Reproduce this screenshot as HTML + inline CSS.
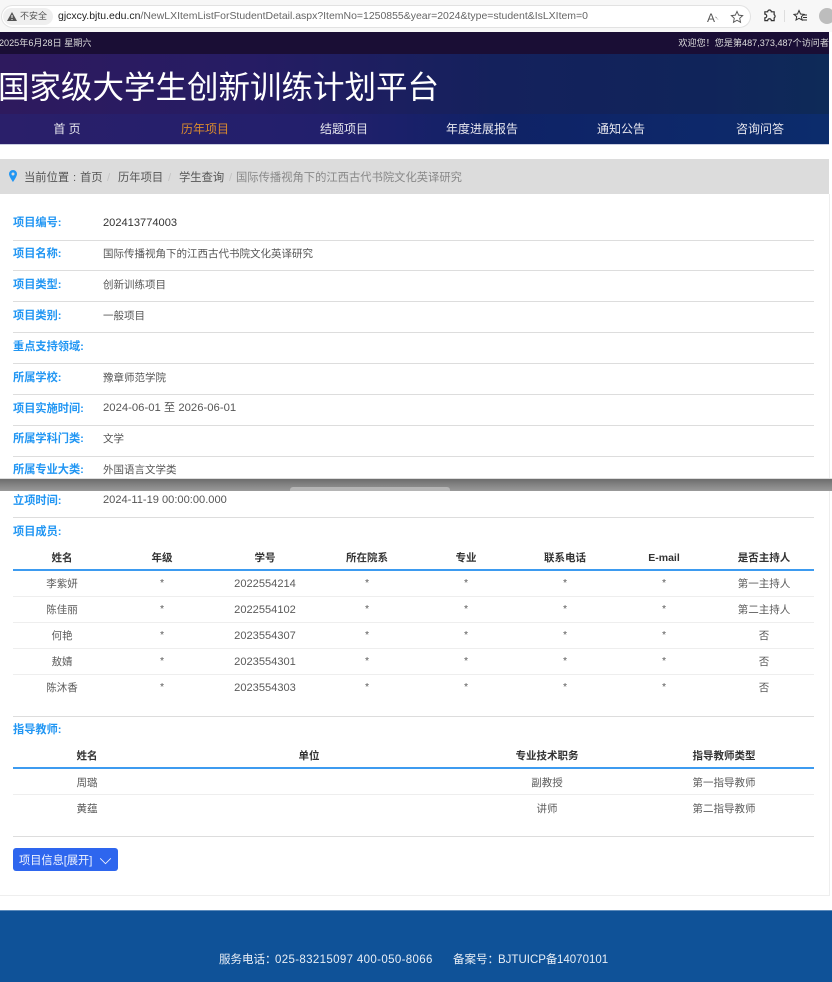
<!DOCTYPE html>
<html lang="zh-CN"><head><meta charset="utf-8"><title>国家级大学生创新训练计划平台</title>
<style>
html,body{margin:0;padding:0;background:#fff}
body{width:832px;height:982px;position:relative;overflow:hidden;font-family:"Liberation Sans","Noto Sans CJK SC",sans-serif;font-size:10.5px;color:#555}
#p{position:absolute;left:0;top:0;width:832px;height:982px;overflow:hidden;filter:blur(.35px)}
.a,.c,.l,.h,.d,.ln,.b{position:absolute}
.a,.c,.l,.h,.d{line-height:20px;white-space:nowrap}
.c,.h{transform:translateX(-50%)}
.l{left:13px;color:#2196f3;font-weight:700;font-size:11.200px;margin-top:1px}
.h{color:#333;font-weight:700;font-size:10.500px;margin-top:1px}
.c{color:#5a5a5a;margin-top:1px}
.a{color:#555}
.d{left:103px;color:#555;margin-top:1px}
.t{font-size:11.100px}
.ln{left:13px;width:801px;height:1px;background:#ddd}
.ls{left:13px;width:801px;height:1px;background:#eee}
.bl{left:13px;width:801px;height:2px;background:#3d9bf0}
.n{position:absolute;top:119px;line-height:20px;font-size:12px;color:#e6e6ee;transform:translateX(-50%);white-space:nowrap}
.bc{font-size:11.300px;top:168px}
.f{font-size:11.500px;top:950px;color:#e8eef6}
</style></head><body><div id="p">

<!-- browser chrome -->
<div class="b" style="left:0;top:0;width:832px;height:32px;background:#f7f7f7"></div>
<div class="b" style="left:1px;top:5px;width:748px;height:21px;background:#fff;border:1px solid #e2e2e2;border-radius:12px"></div>
<div class="b" style="left:3px;top:8px;width:50px;height:17px;background:#efefef;border-radius:9px"></div>
<svg class="b" style="left:6px;top:11px" width="12" height="11" viewBox="0 0 12 11"><path d="M6 1 11 10H1Z" fill="#555"/><rect x="5.500" y="4" width="1" height="3" fill="#fff"/><rect x="5.500" y="8" width="1" height="1" fill="#fff"/></svg>
<div class="a" style="left:20px;top:6px;font-size:9px;color:#555">不安全</div>
<div class="a" style="left:58px;top:7px;font-size:10.470px;color:#222">gjcxcy.bjtu.edu.cn<span style="color:#666">/NewLXItemListForStudentDetail.aspx?ItemNo=1250855&amp;year=2024&amp;type=student&amp;IsLXItem=0</span></div>
<div class="a" style="left:707px;top:7px;font-size:12px;color:#555">A<span style="font-size:6px;vertical-align:4px">৲</span></div>
<svg class="b" style="left:730px;top:10px" width="14" height="14" viewBox="0 0 15 15"><path d="M7.500 1.500 9.300 5.500 13.600 6 10.400 8.900 11.300 13.200 7.500 11 3.700 13.200 4.600 8.900 1.400 6 5.700 5.500Z" fill="none" stroke="#555" stroke-width="1"/></svg>
<svg class="b" style="left:763px;top:9px" width="13" height="14" viewBox="0 0 14 14"><path d="M5 2.500a2 2 0 0 1 4 0h3v3a2 2 0 0 1 0 3.500v3H9a2 2 0 0 0-4 0H2V9a2 2 0 0 0 0-4V2.500Z" fill="none" stroke="#333" stroke-width="1.300"/></svg>
<div class="b" style="left:784px;top:10px;width:1px;height:12px;background:#ddd"></div>
<svg class="b" style="left:793px;top:9px" width="15" height="14" viewBox="0 0 15 14"><path d="M6 1.500 7.500 5 11 5.400 8.400 7.700 9.100 11 6 9.300 3 11 3.700 7.700 1 5.400 4.500 5Z" fill="none" stroke="#333"/><path d="M10 6h4M10 8.500h4M9 11h5" stroke="#333"/></svg>
<div class="b" style="left:819px;top:8px;width:16px;height:16px;border-radius:50%;background:#bdbdbd"></div>

<!-- top bar -->
<div class="b" style="left:0;top:32px;width:829px;height:22px;background:#1a0e35"></div>
<div class="a" style="left:-1px;top:33px;font-size:9.100px;color:#ddd">2025年6月28日 星期六</div>
<div class="a" style="right:3px;top:33px;font-size:9.100px;color:#ddd">欢迎您！您是第487,373,487个访问者</div>

<!-- header -->
<div class="b" style="left:0;top:54px;width:829px;height:60px;background:linear-gradient(90deg,#2e1a5e 0%,#261c64 30%,#14215c 60%,#10245a 85%,#0e2a58 100%)"></div>
<div class="a" style="left:-2px;top:70px;font-size:31.500px;line-height:34px;color:#fff">国家级大学生创新训练计划平台</div>

<!-- nav -->
<div class="b" style="left:0;top:114px;width:829px;height:30px;background:linear-gradient(90deg,#2a1f6a 0%,#221f6c 40%,#0f2266 60%,#0c2c6c 100%)"></div>
<div class="b" style="left:0;top:144px;width:829px;height:1px;background:#c8cce0"></div>
<div class="n" style="left:67px">首 页</div>
<div class="n" style="left:205px;color:#d98a2e">历年项目</div>
<div class="n" style="left:344px">结题项目</div>
<div class="n" style="left:482px">年度进展报告</div>
<div class="n" style="left:621px">通知公告</div>
<div class="n" style="left:760px">咨询问答</div>

<!-- breadcrumb -->
<div class="b" style="left:0;top:159px;width:829px;height:35px;background:#dcdcdc"></div>
<svg class="b" style="left:9px;top:170px" width="8" height="12" viewBox="0 0 8 12"><path fill-rule="evenodd" d="M4 0a4 4 0 0 1 4 4c0 2.500-4 8-4 8S0 6.500 0 4a4 4 0 0 1 4-4Zm0 2.500a1.500 1.500 0 1 0 0 3 1.500 1.500 0 0 0 0-3Z" fill="#2196f3"/></svg>
<div class="a bc" style="left:24px;color:#555">当前位置</div>
<div class="a bc" style="left:73px;color:#555">:</div>
<div class="a bc" style="left:80px;color:#555">首页</div>
<div class="a bc" style="left:107px;color:#c4c4c4">/</div>
<div class="a bc" style="left:118px;color:#555">历年项目</div>
<div class="a bc" style="left:168px;color:#c4c4c4">/</div>
<div class="a bc" style="left:179px;color:#555">学生查询</div>
<div class="a bc" style="left:229px;color:#c4c4c4">/</div>
<div class="a bc" style="left:236px;color:#888">国际传播视角下的江西古代书院文化英译研究</div>

<!-- card edge -->
<div class="b" style="left:829px;top:194px;width:1px;height:701px;background:#eee"></div>
<div class="b" style="left:0;top:895px;width:830px;height:1px;background:#eee"></div>

<!-- info rows -->
<div class="l" style="top:212px">项目编号:</div><div class="d t" style="top:212px;color:#333">202413774003</div>
<div class="ln" style="top:240px"></div>
<div class="l" style="top:243px">项目名称:</div><div class="d" style="top:243px">国际传播视角下的江西古代书院文化英译研究</div>
<div class="ln" style="top:270px"></div>
<div class="l" style="top:274px">项目类型:</div><div class="d" style="top:274px">创新训练项目</div>
<div class="ln" style="top:301px"></div>
<div class="l" style="top:305px">项目类别:</div><div class="d" style="top:305px">一般项目</div>
<div class="ln" style="top:332px"></div>
<div class="l" style="top:336px">重点支持领域:</div>
<div class="ln" style="top:363px"></div>
<div class="l" style="top:367px">所属学校:</div><div class="d" style="top:367px">豫章师范学院</div>
<div class="ln" style="top:394px"></div>
<div class="l" style="top:398px">项目实施时间:</div><div class="d" style="top:397px;font-size:11.300px">2024-06-01 至 2026-06-01</div>
<div class="ln" style="top:425px"></div>
<div class="l" style="top:428px">所属学科门类:</div><div class="d" style="top:428px">文学</div>
<div class="ln" style="top:456px"></div>
<div class="l" style="top:459px">所属专业大类:</div><div class="d" style="top:459px">外国语言文学类</div>

<!-- screenshot seam -->
<div class="b" style="left:0;top:478px;width:832px;height:1px;background:#ddd"></div>
<div class="b" style="left:0;top:479px;width:832px;height:12px;background:linear-gradient(180deg,#6d6d6d,#9a9a9a)"></div>
<div class="b" style="left:290px;top:487px;width:160px;height:4px;background:#b5b5b5;border-radius:3px 3px 0 0"></div>

<div class="l" style="top:490px">立项时间:</div><div class="d t" style="top:489px">2024-11-19 00:00:00.000</div>
<div class="ln" style="top:517px"></div>
<div class="l" style="top:521px">项目成员:</div>

<!-- members table -->
<div class="h" style="left:62px;top:547px">姓名</div><div class="h" style="left:162px;top:547px">年级</div><div class="h" style="left:265px;top:547px">学号</div><div class="h" style="left:367px;top:547px">所在院系</div><div class="h" style="left:466px;top:547px">专业</div><div class="h" style="left:565px;top:547px">联系电话</div><div class="h" style="left:664px;top:547px">E-mail</div><div class="h" style="left:764px;top:547px">是否主持人</div>
<div class="bl b" style="top:569px"></div>

<div class="c" style="left:62px;top:573px">李紫妍</div><div class="c" style="left:162px;top:572px">*</div><div class="c t" style="left:265px;top:573px">2022554214</div><div class="c" style="left:367px;top:572px">*</div><div class="c" style="left:466px;top:572px">*</div><div class="c" style="left:565px;top:572px">*</div><div class="c" style="left:664px;top:572px">*</div><div class="c" style="left:764px;top:573px">第一主持人</div>
<div class="ls b" style="top:596px"></div>
<div class="c" style="left:62px;top:599px">陈佳丽</div><div class="c" style="left:162px;top:598px">*</div><div class="c t" style="left:265px;top:599px">2022554102</div><div class="c" style="left:367px;top:598px">*</div><div class="c" style="left:466px;top:598px">*</div><div class="c" style="left:565px;top:598px">*</div><div class="c" style="left:664px;top:598px">*</div><div class="c" style="left:764px;top:599px">第二主持人</div>
<div class="ls b" style="top:622px"></div>
<div class="c" style="left:62px;top:625px">何艳</div><div class="c" style="left:162px;top:624px">*</div><div class="c t" style="left:265px;top:625px">2023554307</div><div class="c" style="left:367px;top:624px">*</div><div class="c" style="left:466px;top:624px">*</div><div class="c" style="left:565px;top:624px">*</div><div class="c" style="left:664px;top:624px">*</div><div class="c" style="left:764px;top:625px">否</div>
<div class="ls b" style="top:648px"></div>
<div class="c" style="left:62px;top:651px">敖婧</div><div class="c" style="left:162px;top:650px">*</div><div class="c t" style="left:265px;top:651px">2023554301</div><div class="c" style="left:367px;top:650px">*</div><div class="c" style="left:466px;top:650px">*</div><div class="c" style="left:565px;top:650px">*</div><div class="c" style="left:664px;top:650px">*</div><div class="c" style="left:764px;top:651px">否</div>
<div class="ls b" style="top:674px"></div>
<div class="c" style="left:62px;top:677px">陈沐香</div><div class="c" style="left:162px;top:676px">*</div><div class="c t" style="left:265px;top:677px">2023554303</div><div class="c" style="left:367px;top:676px">*</div><div class="c" style="left:466px;top:676px">*</div><div class="c" style="left:565px;top:676px">*</div><div class="c" style="left:664px;top:676px">*</div><div class="c" style="left:764px;top:677px">否</div>

<div class="ln" style="top:716px"></div>
<div class="l" style="top:719px">指导教师:</div>

<!-- teachers table -->
<div class="h" style="left:87px;top:745px">姓名</div><div class="h" style="left:309px;top:745px">单位</div><div class="h" style="left:547px;top:745px">专业技术职务</div><div class="h" style="left:724px;top:745px">指导教师类型</div>
<div class="bl b" style="top:767px"></div>
<div class="c" style="left:87px;top:772px">周璐</div><div class="c" style="left:547px;top:772px">副教授</div><div class="c" style="left:724px;top:772px">第一指导教师</div>
<div class="ls b" style="top:794px"></div>
<div class="c" style="left:87px;top:798px">黄蕴</div><div class="c" style="left:547px;top:798px">讲师</div><div class="c" style="left:724px;top:798px">第二指导教师</div>
<div class="ln" style="top:836px"></div>

<!-- button -->
<div class="b" style="left:13px;top:848px;width:105px;height:23px;background:#2e66ee;border-radius:3px"></div>
<div class="a" style="left:19px;top:851px;font-size:11.200px;color:#f2f5ff">项目信息[展开]</div>
<svg class="b" style="left:99px;top:857px" width="13" height="8" viewBox="0 0 14 9"><path d="M1 1.500 7 7.500 13 1.500" fill="none" stroke="#f2f5ff" stroke-width="1"/></svg>

<!-- footer -->
<div class="b" style="left:0;top:910px;width:832px;height:72px;background:#0f5298"></div>
<div class="b" style="left:0;top:910px;width:832px;height:1px;background:#5d8bbb"></div>
<div class="a f" style="left:219px">服务电话：</div>
<div class="a f" style="left:275px;letter-spacing:.35px">025-83215097 400-050-8066</div>
<div class="a f" style="left:453px">备案号：</div>
<div class="a f" style="left:498px">BJTUICP备</div>
<div class="a f" style="left:557px">14070101</div>
</div></body></html>
